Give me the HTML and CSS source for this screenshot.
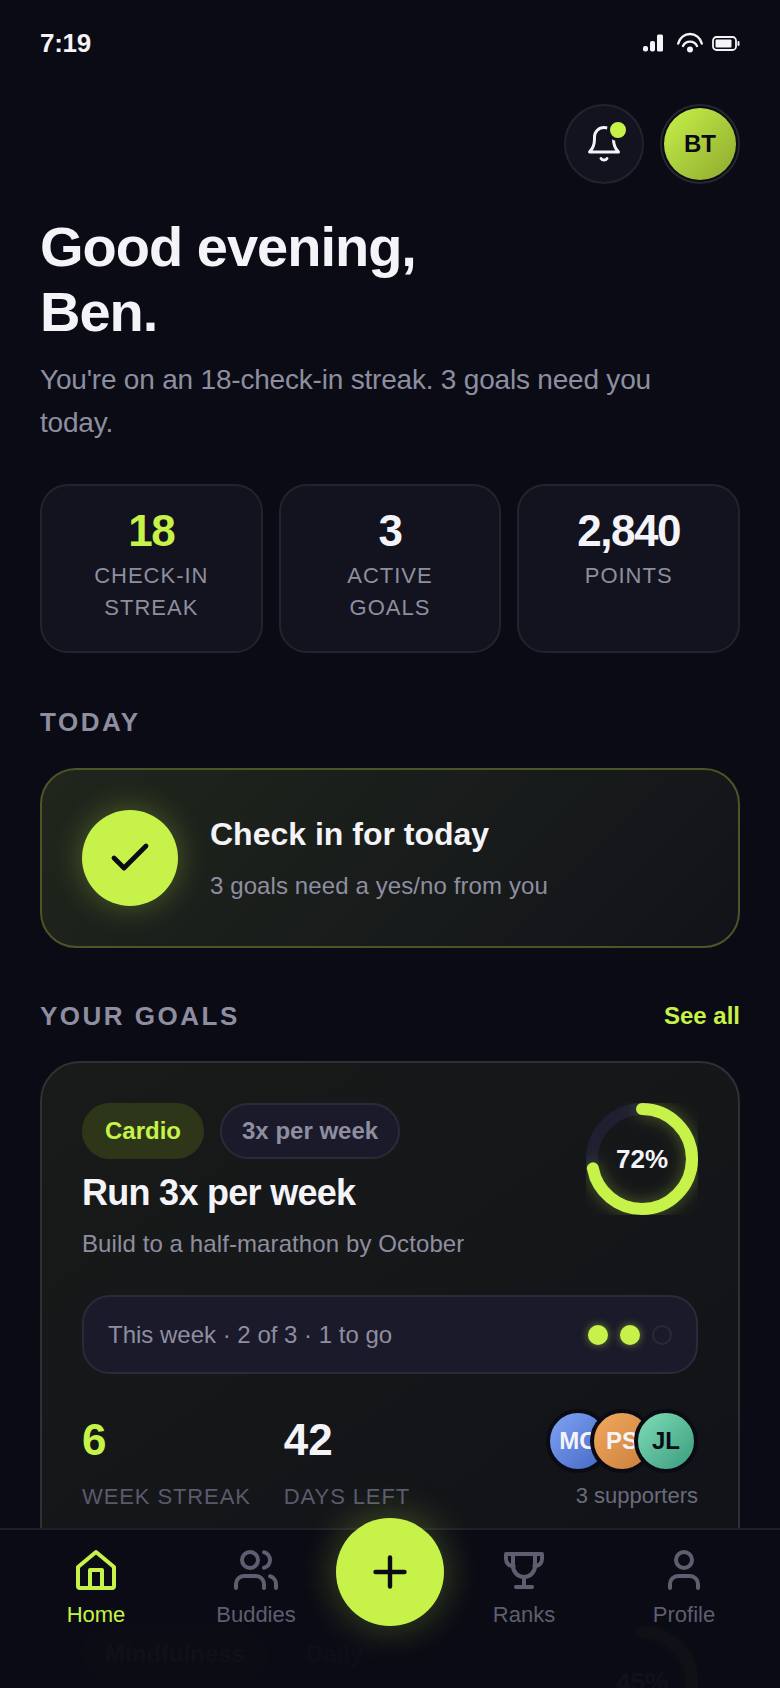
FILE: index.html
```html
<!DOCTYPE html>
<html lang="en">

<head>
    <meta charset="UTF-8">
    <title>Home</title>
    <link rel="stylesheet" href="styles.css">
</head>

<body>
    <div class="screen">
        <div class="status-bar">
            <span class="status-time">7:19</span>
            <div class="status-icons">
                <svg class="signal-icon" width="22" height="18" viewBox="0 0 22 18" fill="#f4f4f8">
                    <rect x="1" y="12" width="5" height="5.500" rx="2"></rect>
                    <rect x="8" y="7" width="5" height="10.500" rx="2"></rect>
                    <rect x="15" y="0.500" width="6" height="17" rx="1.500"></rect>
                </svg>
                <svg class="wifi-icon" width="28" height="26" viewBox="0 0 28 26" fill="none" stroke="#f4f4f8" stroke-width="2.400" stroke-linecap="round">
                    <path d="M2.200 14.500A12.200 12.800 0 0 1 25.800 14.500"></path>
                    <path d="M7 17A7.800 7.800 0 0 1 21 17"></path>
                    <circle cx="14" cy="20.500" r="3" fill="#f4f4f8" stroke="none"></circle>
                </svg>
                <svg width="28" height="16" viewBox="0 0 28 16" fill="none">
                    <rect x="1" y="2" width="23" height="13" rx="3.500" stroke="#f4f4f8" stroke-width="1.800"></rect>
                    <rect x="3.500" y="4.500" width="16" height="8" rx="1" fill="#f4f4f8"></rect>
                    <rect x="25.500" y="6" width="2" height="5" rx="1" fill="#f4f4f8"></rect>
                </svg>
            </div>
        </div>

        <main class="content">
            <div class="top-actions">
                <div class="bell-button">
                    <svg width="36" height="40" viewBox="0 0 36 40" fill="none" stroke="#f4f4f8" stroke-width="3" stroke-linecap="round" stroke-linejoin="round">
                        <path d="M3.500 28h29c-3-3-5-7-5-13V13a9.500 9.500 0 0 0-19 0v2c0 6-2 10-5 13Z"></path>
                        <path d="M15 34.500a3.600 3.600 0 0 0 6 0"></path>
                    </svg>
                    <span class="bell-dot"></span>
                </div>
                <div class="avatar">BT</div>
            </div>

            <h1 class="greeting">Good evening,<br>Ben.</h1>
            <p class="subtitle">You're on an 18-check-in streak. 3 goals need you today.</p>

            <div class="stats">
                <div class="stat-card">
                    <div class="stat-value lime">18</div>
                    <div class="stat-label">CHECK-IN STREAK</div>
                </div>
                <div class="stat-card">
                    <div class="stat-value">3</div>
                    <div class="stat-label">ACTIVE GOALS</div>
                </div>
                <div class="stat-card">
                    <div class="stat-value">2,840</div>
                    <div class="stat-label">POINTS</div>
                </div>
            </div>

            <h2 class="section-title today-title">TODAY</h2>

            <div class="checkin-card">
                <div class="checkin-circle">
                    <svg width="48" height="48" viewBox="0 0 24 24" fill="none" stroke="#0a0b14" stroke-width="2.400" stroke-linecap="round" stroke-linejoin="round">
                        <path d="M20 6 9 17l-5-5"></path>
                    </svg>
                </div>
                <div>
                    <div class="checkin-title">Check in for today</div>
                    <div class="checkin-sub">3 goals need a yes/no from you</div>
                </div>
            </div>

            <div class="section-row">
                <h2 class="section-title">YOUR GOALS</h2>
                <span class="see-all">See all</span>
            </div>

            <div class="goal-card">
                <div class="goal-head">
                    <div>
                        <div class="pills">
                            <span class="pill pill-lime">Cardio</span>
                            <span class="pill">3x per week</span>
                        </div>
                        <div class="goal-title">Run 3x per week</div>
                        <div class="goal-sub">Build to a half-marathon by October</div>
                    </div>
                    <div class="ring">
                        <svg width="112" height="112" viewBox="0 0 112 112" fill="none">
                            <circle class="ring-track" cx="56" cy="56" r="50"></circle>
                            <circle class="ring-fill" cx="56" cy="56" r="50" pathLength="100" stroke-dasharray="72 100" transform="rotate(-90 56 56)"></circle>
                        </svg>
                        <span class="ring-text">72%</span>
                    </div>
                </div>

                <div class="week-row">
                    <span>This week · 2 of 3 · 1 to go</span>
                    <div class="week-dots">
                        <span class="dot dot-on"></span>
                        <span class="dot dot-on"></span>
                        <span class="dot"></span>
                    </div>
                </div>

                <div class="goal-footer">
                    <div class="goal-metric">
                        <div class="metric-value lime">6</div>
                        <div class="metric-label">WEEK STREAK</div>
                    </div>
                    <div class="goal-metric">
                        <div class="metric-value">42</div>
                        <div class="metric-label">DAYS LEFT</div>
                    </div>
                    <div class="supporters">
                        <div class="faces">
                            <span class="face face-blue">MC</span>
                            <span class="face face-orange">PS</span>
                            <span class="face face-green">JL</span>
                        </div>
                        <div class="supporters-text">3 supporters</div>
                    </div>
                </div>
            </div>

            <div class="goal-card goal-card-next">
                <div class="goal-head">
                    <div class="pills">
                        <span class="pill pill-lime">Mindfulness</span>
                        <span class="pill">Daily</span>
                    </div>
                    <div class="ring">
                        <svg width="112" height="112" viewBox="0 0 112 112" fill="none">
                            <circle class="ring-track" cx="56" cy="56" r="50"></circle>
                            <circle class="ring-fill" cx="56" cy="56" r="50" pathLength="100" stroke-dasharray="45 100" transform="rotate(-90 56 56)"></circle>
                        </svg>
                        <span class="ring-text">45%</span>
                    </div>
                </div>
            </div>
        </main>

        <nav class="tab-bar">
            <div class="tab tab-active">
                <svg class="tab-icon" viewBox="0 0 24 24">
                    <path d="M3 10.500 12 3l9 7.500V20a1 1 0 0 1-1 1H4a1 1 0 0 1-1-1Z"></path>
                    <path d="M9 21v-9h6v9"></path>
                </svg>
                <span>Home</span>
            </div>
            <div class="tab">
                <svg class="tab-icon" viewBox="0 0 24 24">
                    <path d="M16 21v-2a4 4 0 0 0-4-4H6a4 4 0 0 0-4 4v2"></path>
                    <circle cx="9" cy="7" r="4"></circle>
                    <path d="M22 21v-2a4 4 0 0 0-3-3.870"></path>
                    <path d="M16 3.130a4 4 0 0 1 0 7.750"></path>
                </svg>
                <span>Buddies</span>
            </div>
            <div class="tab-spacer"></div>
            <div class="tab">
                <svg class="tab-icon" viewBox="0 0 24 24">
                    <path d="M6.500 4h11v6a5.500 5.500 0 0 1-11 0Z"></path>
                    <path d="M6.500 4H3v2.500A3.500 3.500 0 0 0 6.800 10"></path>
                    <path d="M17.500 4H21v2.500a3.500 3.500 0 0 1-3.800 3.500"></path>
                    <path d="M12 15.500V20.500"></path>
                    <path d="M8 20.500h8"></path>
                </svg>
                <span>Ranks</span>
            </div>
            <div class="tab">
                <svg class="tab-icon" viewBox="0 0 24 24">
                    <path d="M19 21v-2a4 4 0 0 0-4-4H9a4 4 0 0 0-4 4v2"></path>
                    <circle cx="12" cy="7" r="4"></circle>
                </svg>
                <span>Profile</span>
            </div>
            <div class="fab">
                <svg width="48" height="48" viewBox="0 0 24 24" fill="none" stroke="#0a0b14" stroke-width="2.200" stroke-linecap="round">
                    <path d="M12 4.750v14.500"></path>
                    <path d="M4.750 12h14.500"></path>
                </svg>
            </div>
        </nav>
    </div>
</body>

</html>
```

FILE: styles.css
```css
* {
    box-sizing: border-box;
}

body {
    margin: 0;
    background-color: #0a0b14;
    color: #f4f4f8;
    font-family: "Liberation Sans", Arial, sans-serif;
}

.screen {
    position: relative;
    width: 780px;
    height: 1688px;
    overflow: hidden;
}

.lime {
    color: #c6f24a;
}

/* status bar */
.status-bar {
    display: flex;
    justify-content: space-between;
    align-items: center;
    height: 86px;
    padding: 0 40px;
}

.status-time {
    font-size: 26px;
    font-weight: 700;
    letter-spacing: -0.3px;
}

.status-icons {
    display: flex;
    align-items: center;
    gap: 8px;
}

.signal-icon {
    margin-right: 4px;
}

.wifi-icon {
    margin-top: -2px;
}

/* top */
.content {
    padding: 18px 40px 0;
}

.top-actions {
    display: flex;
    justify-content: flex-end;
    gap: 16px;
}

.bell-button {
    position: relative;
    display: flex;
    justify-content: center;
    align-items: center;
    width: 80px;
    height: 80px;
    background-color: #12131e;
    border: 2px solid #22232e;
    border-radius: 50%;
}

.bell-dot {
    position: absolute;
    top: 13px;
    right: 13px;
    width: 22px;
    height: 22px;
    background-color: #c6f24a;
    border: 3px solid #12131e;
    border-radius: 50%;
}

.avatar {
    display: flex;
    justify-content: center;
    align-items: center;
    width: 80px;
    height: 80px;
    padding: 2px;
    background: linear-gradient(135deg, #c6f24a, #8fa82e) content-box;
    border: 2px solid #26272f;
    border-radius: 50%;
    color: #0a0b14;
    font-size: 24px;
    font-weight: 700;
}

.greeting {
    margin: 30px 0 0;
    font-size: 56px;
    line-height: 65px;
    font-weight: 700;
    letter-spacing: -1px;
}

.subtitle {
    max-width: 660px;
    margin: 14px 0 0;
    font-size: 28px;
    line-height: 43px;
    letter-spacing: -0.2px;
    color: #8e8ea0;
}

/* stats */
.stats {
    display: grid;
    grid-template-columns: repeat(3, 1fr);
    gap: 16px;
    margin-top: 40px;
}

.stat-card {
    height: 169px;
    padding: 23px 28px;
    background-color: #12131e;
    border: 2px solid #22232e;
    border-radius: 28px;
    text-align: center;
}

.stat-value {
    margin: 0 -20px;
    font-size: 44px;
    line-height: 44px;
    font-weight: 700;
    letter-spacing: -1.5px;
}

.stat-label {
    margin-top: 7px;
    font-size: 22px;
    line-height: 32px;
    letter-spacing: 1px;
    color: #8e8ea0;
}

/* sections */
.section-title {
    margin: 0;
    font-size: 26px;
    line-height: 30px;
    font-weight: 700;
    letter-spacing: 2.5px;
    color: #8e8ea0;
}

.today-title {
    margin-top: 54px;
}

.checkin-card {
    display: flex;
    align-items: center;
    gap: 32px;
    margin-top: 31px;
    padding: 40px;
    background: linear-gradient(135deg, #20261c, #12131a);
    border: 2px solid #4a5626;
    border-radius: 36px;
}

.checkin-circle {
    display: flex;
    justify-content: center;
    align-items: center;
    width: 96px;
    height: 96px;
    background-color: #c6f24a;
    border-radius: 50%;
    box-shadow: 0 0 32px rgba(198, 242, 74, 0.3);
}

.checkin-title {
    font-size: 32px;
    line-height: 40px;
    font-weight: 700;
}

.checkin-sub {
    margin-top: 16px;
    font-size: 24px;
    line-height: 32px;
    letter-spacing: 0.1px;
    color: #8e8ea0;
}

.section-row {
    display: flex;
    justify-content: space-between;
    align-items: center;
    margin-top: 53px;
}

.see-all {
    font-size: 24px;
    font-weight: 700;
    color: #c6f24a;
}

/* goal cards */
.goal-card {
    margin-top: 30px;
    padding: 40px 40px 52px;
    background: linear-gradient(145deg, #181b19, #111218);
    border: 2px solid #2e3034;
    border-radius: 40px;
}

.goal-card-next {
    margin-top: 17px;
}

.goal-head {
    display: flex;
    justify-content: space-between;
    align-items: flex-start;
}

.pills {
    display: flex;
    gap: 16px;
}

.pill {
    padding: 10px 20px;
    background-color: #1a1a2a;
    border: 2px solid #2a2a3a;
    border-radius: 28px;
    font-size: 24px;
    line-height: 32px;
    font-weight: 700;
    color: #8e8ea0;
}

.pill-lime {
    padding: 10px 21px;
    background-color: #2e3619;
    border-color: #2e3619;
    color: #c6f24a;
}

.goal-title {
    margin-top: 12px;
    font-size: 36px;
    line-height: 44px;
    font-weight: 700;
    letter-spacing: -0.72px;
}

.goal-sub {
    margin-top: 13px;
    font-size: 24px;
    line-height: 32px;
    letter-spacing: 0.1px;
    color: #8e8ea0;
}

.ring {
    position: relative;
    width: 112px;
    height: 112px;
}

.ring svg {
    display: block;
}

.ring-track {
    stroke: #1e1f30;
    stroke-width: 12;
}

.ring-fill {
    stroke: #c6f24a;
    stroke-width: 12;
    stroke-linecap: round;
    filter: drop-shadow(0 0 8px rgba(198, 242, 74, 0.35));
}

.ring-text {
    position: absolute;
    inset: 0;
    display: flex;
    justify-content: center;
    align-items: center;
    font-size: 26px;
    font-weight: 700;
}

.week-row {
    display: flex;
    justify-content: space-between;
    align-items: center;
    height: 79px;
    margin-top: 35px;
    padding: 0 24px;
    background-color: #1a1a2a;
    border: 2px solid #2a2a3a;
    border-radius: 28px;
    font-size: 24px;
    color: #8e8ea0;
}

.week-dots {
    display: flex;
    gap: 12px;
}

.dot {
    width: 20px;
    height: 20px;
    border: 2px solid #2a2a3a;
    border-radius: 50%;
}

.dot-on {
    background-color: #c6f24a;
    border-color: #c6f24a;
    box-shadow: 0 0 8px rgba(198, 242, 74, 0.5);
}

.goal-footer {
    display: flex;
    gap: 33px;
    margin-top: 35px;
}

.metric-value {
    padding-top: 1px;
    font-size: 44px;
    line-height: 60px;
    font-weight: 700;
}

.metric-label {
    margin-top: 11px;
    font-size: 22px;
    line-height: 32px;
    letter-spacing: 0.9px;
    color: #5a5a6e;
}

.supporters {
    margin-left: auto;
    text-align: right;
}

.faces {
    display: flex;
}

.face {
    display: flex;
    justify-content: center;
    align-items: center;
    width: 64px;
    height: 64px;
    margin-left: -20px;
    border: 4px solid #0a0b14;
    border-radius: 50%;
    font-size: 24px;
    font-weight: 700;
}

.face:first-child {
    margin-left: 0;
}

.face-blue {
    background: linear-gradient(135deg, #7fa4f4, #4566c4);
}

.face-orange {
    background: linear-gradient(135deg, #f4a860, #c87f3c);
}

.face-green {
    background: linear-gradient(135deg, #7fdcb8, #3a9c7c);
    color: #0a0b14;
}

.supporters-text {
    margin-top: 7px;
    font-size: 22px;
    line-height: 32px;
    color: #6a6a7c;
}

/* bottom nav */
.tab-bar {
    position: absolute;
    left: 0;
    right: 0;
    bottom: 0;
    display: grid;
    grid-template-columns: 1fr 1fr 108px 1fr 1fr;
    height: 160px;
    padding: 0 16px;
    background-color: rgba(10, 11, 20, 0.975);
    border-top: 2px solid #1e1f2a;
}

.tab {
    display: flex;
    flex-direction: column;
    align-items: center;
    padding-top: 16px;
    font-size: 22px;
    color: #5e5e70;
}

.tab span {
    margin-top: 6px;
    line-height: 30px;
}

.tab-icon {
    width: 48px;
    height: 48px;
    fill: none;
    stroke: #5e5e70;
    stroke-width: 2;
    stroke-linecap: round;
    stroke-linejoin: round;
}

.tab-active {
    color: #c6f24a;
}

.tab-active .tab-icon {
    stroke: #c6f24a;
}

.fab {
    position: absolute;
    top: -12px;
    left: 336px;
    display: flex;
    justify-content: center;
    align-items: center;
    width: 108px;
    height: 108px;
    background-color: #c6f24a;
    border-radius: 50%;
    box-shadow: 0 0 40px rgba(198, 242, 74, 0.3);
}
```
